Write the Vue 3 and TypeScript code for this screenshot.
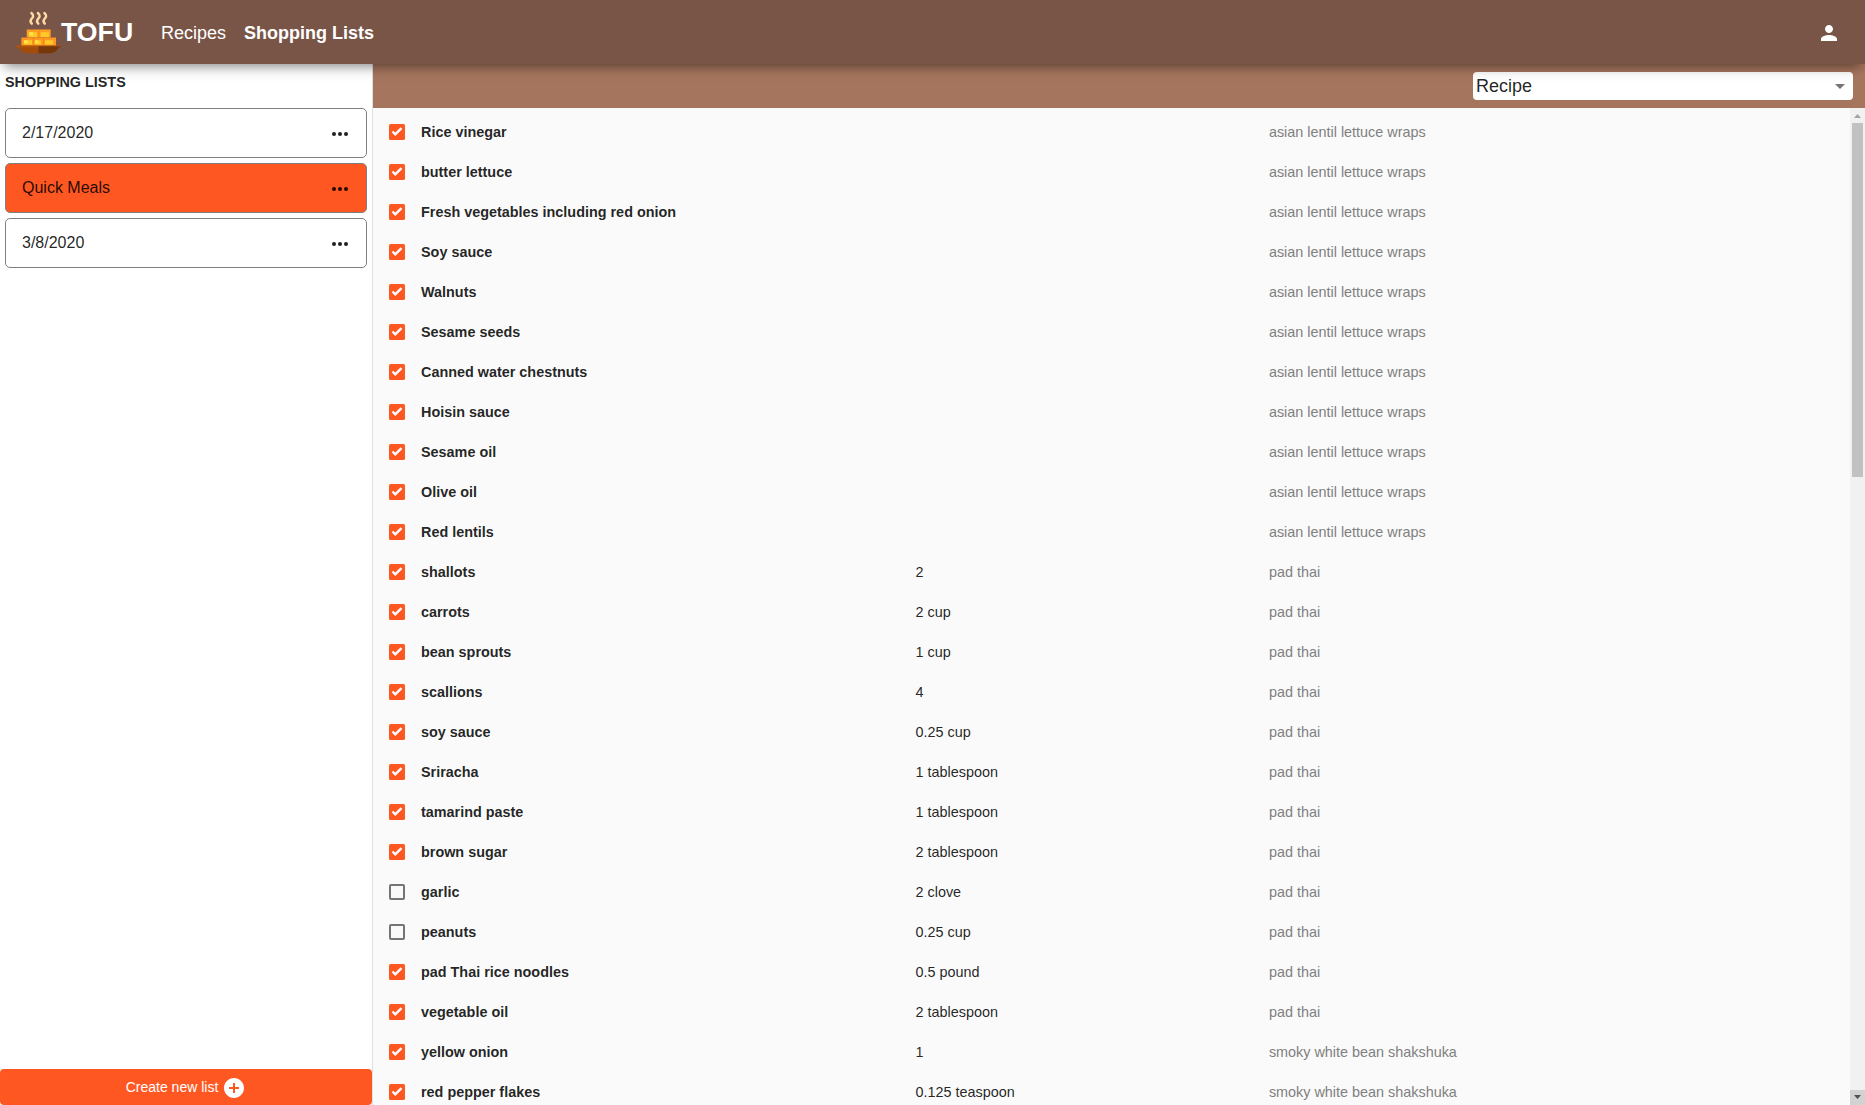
<script setup lang="ts">
interface Item {
  name: string
  amount: string
  recipe: string
  checked: boolean
}

const wraps = 'asian lentil lettuce wraps'
const thai = 'pad thai'
const shakshuka = 'smoky white bean shakshuka'

const item = (name: string, amount: string, recipe: string, checked = true): Item => ({ name, amount, recipe, checked })

const lists = ['2/17/2020', 'Quick Meals', '3/8/2020']
const selected = 'Quick Meals'

const items: Item[] = [
  item('Rice vinegar', '', wraps),
  item('butter lettuce', '', wraps),
  item('Fresh vegetables including red onion', '', wraps),
  item('Soy sauce', '', wraps),
  item('Walnuts', '', wraps),
  item('Sesame seeds', '', wraps),
  item('Canned water chestnuts', '', wraps),
  item('Hoisin sauce', '', wraps),
  item('Sesame oil', '', wraps),
  item('Olive oil', '', wraps),
  item('Red lentils', '', wraps),
  item('shallots', '2', thai),
  item('carrots', '2 cup', thai),
  item('bean sprouts', '1 cup', thai),
  item('scallions', '4', thai),
  item('soy sauce', '0.25 cup', thai),
  item('Sriracha', '1 tablespoon', thai),
  item('tamarind paste', '1 tablespoon', thai),
  item('brown sugar', '2 tablespoon', thai),
  item('garlic', '2 clove', thai, false),
  item('peanuts', '0.25 cup', thai, false),
  item('pad Thai rice noodles', '0.5 pound', thai),
  item('vegetable oil', '2 tablespoon', thai),
  item('yellow onion', '1', shakshuka),
  item('red pepper flakes', '0.125 teaspoon', shakshuka),
]
</script>

<template>
  <div class="app">
    <header class="header">
      <svg class="logo" width="45" height="45" viewBox="0 0 45 45">
        <g fill="none" stroke="#ffd9a6" stroke-width="2.4" stroke-linecap="round">
          <path d="M15.400 3c3 2.600 1.600 4.200.2 5.800s-1.800 3 .2 4.900" />
          <path d="M21.900 3c3 2.600 1.600 4.200.2 5.800s-1.800 3 .2 4.900" />
          <path d="M28.400 3c3 2.600 1.600 4.200.2 5.800s-1.800 3 .2 4.900" />
        </g>
        <path d="M10.700 19.500h24V27.500h-24z" fill="#ff9f22" />
        <path d="M5.400 27.500h34.600v8.300H5.400z" fill="#ff981f" />
        <path d="M12.900 22.200h8.200v4.800h-8.200zM24.700 22.200h8.200v4.800h-8.200zM7.900 30.200h8.200v4.400H7.900zM18.900 30.200h6v4.400h-6zM28.900 30.200h8.200v4.400h-8.200z" fill="#ffc928" />
        <path d="M12.900 22.200h4v3h-4zM7.900 30.200h4v3h-4zM18.900 30.200h3v3h-3z" fill="#ffe14a" />
        <path d="M22.300 19.500h1v8h-1zM16.800 27.500h1v8h-1zM27.200 27.500h1v8h-1z" fill="#f7811c" />
        <path d="M0 35.400h45v1.400l-2.500 1.200H2.500L0 36.800z" fill="#b0540c" />
        <path d="M2.500 37.500H42.500c-2 3.400-4.500 5.700-8.500 5.700H11c-4 0-6.500-2.300-8.500-5.700z" fill="#a34b0b" />
        <path d="M22.500 36.200H45v.6l-2.500 1.200c-2 3.200-4.500 5.200-8.500 5.200H22.500z" fill="#76380a" />
      </svg>
      <span class="brand">TOFU</span>
      <nav class="nav">
        <a>Recipes</a>
        <a class="active">Shopping Lists</a>
      </nav>
      <svg class="user" width="24" height="24" viewBox="0 0 24 24" fill="#fff">
        <path d="M12 12c2.210 0 4-1.790 4-4s-1.790-4-4-4-4 1.790-4 4 1.790 4 4 4zm0 2c-2.670 0-8 1.340-8 4v2h16v-2c0-2.660-5.330-4-8-4z" />
      </svg>
    </header>

    <div class="body">
      <aside class="sidebar">
        <h2 class="title">SHOPPING LISTS</h2>
        <div class="cards">
          <div v-for="name in lists" :key="name" class="card" :class="{ selected: name === selected }">
            <span>{{ name }}</span>
            <svg width="24" height="24" viewBox="0 0 24 24" fill="currentColor">
              <circle cx="6" cy="12" r="2" />
              <circle cx="12" cy="12" r="2" />
              <circle cx="18" cy="12" r="2" />
            </svg>
          </div>
        </div>
        <button class="create">
          <span>Create new list</span>
          <svg width="24" height="24" viewBox="0 0 24 24" fill="#fff">
            <path d="M12 2C6.480 2 2 6.480 2 12s4.480 10 10 10 10-4.480 10-10S17.520 2 12 2zm5 11h-4v4h-2v-4H7v-2h4V7h2v4h4v2z" />
          </svg>
        </button>
      </aside>

      <main class="main">
        <div class="toolbar">
          <div class="select">
            <span>Recipe</span>
            <svg width="24" height="24" viewBox="0 0 24 24" fill="#757575"><path d="M7 10l5 5 5-5z" /></svg>
          </div>
        </div>
        <div class="content">
          <div class="rows">
            <div v-for="(row, i) in items" :key="i" class="row">
              <svg class="box" width="24" height="24" viewBox="0 0 24 24">
                <template v-if="row.checked">
                  <rect x="4" y="4" width="16" height="16" rx="1.600" fill="#ff5722" />
                  <path d="M7.500 11.500l2.800 2.800 6.200-6.200" fill="none" stroke="#fff" stroke-width="2.400" />
                </template>
                <rect v-else x="5" y="5" width="14" height="14" rx="1" fill="none" stroke="#757575" stroke-width="2" />
              </svg>
              <span class="name">{{ row.name }}</span>
              <span class="amount">{{ row.amount }}</span>
              <span class="recipe">{{ row.recipe }}</span>
            </div>
          </div>
          <div class="scroll">
            <svg width="15" height="15" viewBox="0 0 15 15"><path d="M4 10l3.500-4L11 10z" fill="#a3a3a3" /></svg>
            <div class="track"><div class="thumb"></div></div>
            <svg class="down" width="15" height="15" viewBox="0 0 15 15"><path d="M4 5h7l-3.500 4z" fill="#505050" /></svg>
          </div>
        </div>
      </main>
    </div>
  </div>
</template>

<style>
body {
  overflow: hidden;
}
</style>

<style scoped>
.app {
  height: 100vh;
  display: flex;
  flex-direction: column;
  overflow: hidden;
  background: #fafafa;
  color: rgba(0, 0, 0, 0.87);
  font-family: "Liberation Sans", Arial, sans-serif;
  font-size: 14.4px;
}
svg {
  display: block;
  flex: none;
}
.header {
  position: relative;
  z-index: 1;
  box-sizing: border-box;
  flex: none;
  height: 64px;
  padding: 0 24px 0 16px;
  display: flex;
  align-items: center;
  background: #795548;
  color: #fff;
  box-shadow: 0 6px 12px -4px rgba(0, 0, 0, 0.5);
}
.brand {
  width: 73px;
  font-size: 26.700px;
  font-weight: 700;
  line-height: 32px;
}
.nav {
  flex: 1;
  display: flex;
  gap: 18px;
  margin: 2px 0 0 27px;
  font-size: 18px;
}
.nav .active {
  font-weight: 700;
}
.user {
  margin: 2px 0 0;
}
.body {
  flex: 1;
  min-height: 0;
  display: flex;
}
.sidebar {
  flex: none;
  width: 372px;
  display: flex;
  flex-direction: column;
  background: #fff;
  border-right: 1px solid #e0e0e0;
}
.title {
  margin: 0;
  padding: 8px 5px 16px;
  font-size: 14.4px;
  line-height: 20px;
}
.cards {
  flex: 1;
  display: flex;
  flex-direction: column;
  gap: 5px;
  padding: 0 5px;
}
.card {
  box-sizing: border-box;
  height: 50px;
  padding: 0 14px 0 16px;
  display: flex;
  align-items: center;
  justify-content: space-between;
  border: 1px solid gray;
  border-radius: 5px;
  font-size: 16px;
}
.card span {
  line-height: 24px;
  margin-bottom: 1px;
}
.card svg {
  margin-top: 2px;
}
.card.selected {
  background: #ff5722;
}
.create {
  height: 36px;
  padding: 0;
  display: flex;
  align-items: center;
  justify-content: center;
  gap: 4px;
  border: 0;
  border-radius: 4px;
  background: #ff5722;
  color: #fff;
  font: inherit;
  font-size: 14px;
}
.create svg {
  margin-top: 2px;
}
.main {
  flex: 1;
  min-width: 0;
  display: flex;
  flex-direction: column;
}
.toolbar {
  flex: none;
  height: 44px;
  padding-right: 12px;
  display: flex;
  align-items: center;
  justify-content: flex-end;
  background: #a6755d;
}
.select {
  box-sizing: border-box;
  width: 380px;
  height: 28px;
  padding: 0 1px 0 3px;
  display: flex;
  align-items: center;
  justify-content: space-between;
  border-radius: 4px;
  background: #fff;
  font-size: 18px;
}
.content {
  flex: 1;
  min-height: 0;
  display: flex;
}
.rows {
  flex: 1;
  padding-top: 4px;
  overflow: hidden;
}
.row {
  height: 40px;
  display: grid;
  grid-template-columns: 36px 494.500px 353.400px 1fr;
  align-items: center;
  padding-left: 12px;
  line-height: 20px;
}
.name {
  font-weight: 700;
}
.recipe {
  color: gray;
}
.scroll {
  width: 15px;
  display: flex;
  flex-direction: column;
  background: #f1f1f1;
}
.track {
  flex: 1;
  padding: 0 2px;
}
.thumb {
  height: 354px;
  background: #c1c1c1;
}
.down {
  background: #d2d2d2;
}
</style>
